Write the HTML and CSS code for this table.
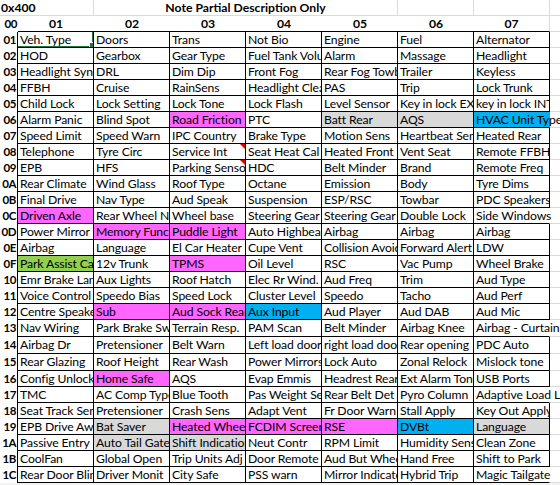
FILE: index.html
```html
<!DOCTYPE html>
<html>
<head>
<meta charset="utf-8">
<link rel="stylesheet" href="styles.css">
</head>
<body>
<div class="sheet" id="sheet">
  <div class="c tl"><span class="b">0x400</span></div>
  <div class="c tg"></div>
  <div class="c tg span4 center b">Note Partial Description Only</div>
  <div class="c tg"></div>
  <div class="c tg"></div>
  <div class="c tb"></div>

  <div class="c rh rh0">00</div>
  <div class="c ch">01</div><div class="c ch">02</div><div class="c ch">03</div><div class="c ch">04</div><div class="c ch">05</div><div class="c ch">06</div><div class="c ch chl">07</div>
  <div class="c ext"></div>
</div>
<script src="app.js"></script>
</body>
</html>
```
FILE: app.js
```js
var rows = [
 ["01","Veh. Type","Doors","Trans","Not Bio","Engine","Fuel","Alternator"],
 ["02","HOD","Gearbox","Gear Type","Fuel Tank Volume","Alarm","Massage","Headlight"],
 ["03","Headlight Sync","DRL","Dim Dip","Front Fog","Rear Fog Towbar","Trailer","Keyless"],
 ["04","FFBH","Cruise","RainSens","Headlight Cleaning","PAS","Trip","Lock Trunk"],
 ["05","Child Lock","Lock Setting","Lock Tone","Lock Flash","Level Sensor","Key in lock EXT","key in lock INT"],
 ["06","Alarm Panic","Blind Spot","Road Friction|p","PTC","Batt Rear|g","AQS|g","HVAC Unit Type|b|o"],
 ["07","Speed Limit","Speed Warn","IPC Country","Brake Type","Motion Sens","Heartbeat Sensor","Heated Rear"],
 ["08","Telephone","Tyre Circ","Service Int|n","Seat Heat Cal","Heated Front","Vent Seat","Remote FFBH"],
 ["09","EPB","HFS","Parking Sensor|n","HDC","Belt Minder","Brand","Remote Freq"],
 ["0A","Rear Climate","Wind Glass","Roof Type","Octane","Emission","Body","Tyre Dims"],
 ["0B","Final Drive","Nav Type","Aud Speak","Suspension","ESP/RSC","Towbar","PDC Speakers"],
 ["0C","Driven Axle|p","Rear Wheel Nut","Wheel base","Steering Gear","Steering Gear","Double Lock","Side Windows|o"],
 ["0D","Power Mirror","Memory Func|p","Puddle Light|p","Auto Highbeam","Airbag","Airbag","Airbag"],
 ["0E","Airbag","Language","El Car Heater","Cupe Vent","Collision Avoid","Forward Alert","LDW"],
 ["0F","Park Assist Cam|gr","12v Trunk","TPMS|p","Oil Level","RSC","Vac Pump","Wheel Brake"],
 ["10","Emr Brake Lamp","Aux Lights","Roof Hatch","Elec Rr Wind.","Aud Freq","Trim","Aud Type"],
 ["11","Voice Control","Speedo Bias","Speed Lock","Cluster Level","Speedo","Tacho","Aud Perf"],
 ["12","Centre Speaker","Sub|p","Aud Sock Rear|p","Aux Input|b","Aud Player","Aud DAB","Aud Mic"],
 ["13","Nav Wiring","Park Brake Sw","Terrain Resp.","PAM Scan","Belt Minder","Airbag Knee","Airbag - Curtain|o"],
 ["14","Airbag Dr","Pretensioner","Belt Warn","Left load door","right load door","Rear opening","PDC Auto"],
 ["15","Rear Glazing","Roof Height","Rear Wash","Power Mirrors","Lock Auto","Zonal Relock","Mislock tone"],
 ["16","Config Unlock","Home Safe|p","AQS","Evap Emmis","Headrest Rear","Ext Alarm Tone","USB Ports"],
 ["17","TMC","AC Comp Type","Blue Tooth","Pas Weight Sensor","Rear Belt Det","Pyro Column","Adaptive Load Limiter|o"],
 ["18","Seat Track Sensor","Pretensioner","Crash Sens","Adapt Vent","Fr Door Warn","Stall Apply","Key Out Apply"],
 ["19","EPB Drive Away","Bat Saver|g","Heated Wheel|p","FCDIM Screen|p","RSE|p","DVBt|b","Language|g"],
 ["1A","Passive Entry","Auto Tail Gate|g","Shift Indication|g","Neut Contr","RPM Limit","Humidity Sensor","Clean Zone"],
 ["1B","CoolFan","Global Open","Trip Units Adj","Door Remote","Aud But Wheel","Hand Free","Shift to Park"],
 ["1C","Rear Door Blind","Driver Monit","City Safe","PSS warn","Mirror Indicator","Hybrid Trip","Magic Tailgate|o"]
];
var sheet = document.getElementById("sheet");
rows.forEach(function (r, ri) {
  var h = document.createElement("div");
  h.className = "c rh";
  h.textContent = r[0];
  sheet.appendChild(h);
  for (var i = 1; i < r.length; i++) {
    var parts = r[i].split("|");
    var d = document.createElement("div");
    var cls = "c d";
    for (var k = 1; k < parts.length; k++) { cls += " f-" + parts[k]; }
    if (ri === 0 && i === 1) cls += " sel";
    d.className = cls;
    var s = document.createElement("span");
    s.className = "t";
    s.textContent = parts[0];
    d.appendChild(s);
    sheet.appendChild(d);
  }
  var e = document.createElement("div");
  e.className = "c ext";
  sheet.appendChild(e);
});
```
FILE: styles.css
```css
html, body {
  margin: 0;
  padding: 0;
  overflow: hidden;
  background: #f2f2f2;
}
.sheet {
  display: grid;
  grid-template-columns: 18px repeat(7, 76px) 1fr;
  grid-template-rows: 16px 16px repeat(18, 16px) 17px 17px 17px 16px repeat(6, 16px);
  background: #fff;
  font-family: Lato, "Liberation Sans", sans-serif;
  font-size: 12.2px;
  color: #000;
  width: 560px;
  overflow: hidden;
}
.c {
  box-sizing: border-box;
  white-space: nowrap;
  line-height: 15px;
  position: relative;
}
.b { font-weight: bold; }
.center { text-align: center; }
.tl {
  border-bottom: 1px solid #dadada;
  overflow: visible;
  padding-left: 1px;
  z-index: 1;
}
.tg {
  border-bottom: 1px solid #dadada;
  border-right: 1px solid #dadada;
}
.tb { border-bottom: 1px solid #dadada; }
.span4 { grid-column: span 4; }
.rh {
  font-weight: bold;
  font-size: 11.5px;
  letter-spacing: -0.4px;
  text-align: right;
  padding-right: 1px;
  border-right: 1px solid #000;
}
.rh0 { border-right: none; }
.ch {
  font-weight: bold;
  text-align: center;
  border-bottom: 1px solid #000;
}
.chl { border-right: 1px solid #dadada; }
.ext { border-bottom: 1px solid #dadada; }
.d {
  border-right: 1px solid #000;
  border-bottom: 1px solid #000;
  padding-left: 2px;
  overflow: hidden;
  letter-spacing: -0.1px;
}
.f-p { background: #ff66ff; }
.f-b { background: #00b0f0; }
.f-g { background: #d9d9d9; }
.f-gr { background: #92d050; }
.f-o {
  overflow: visible;
  border-right-color: transparent;
  z-index: 1;
}
.f-n::after {
  content: "";
  position: absolute;
  top: 0;
  right: 0;
  border-style: solid;
  border-width: 0 5px 5px 0;
  border-color: transparent #e00000 transparent transparent;
}
.sel::before {
  content: "";
  position: absolute;
  top: -2px;
  left: -2px;
  right: -1px;
  bottom: -1px;
  border: 2px solid #217346;
  z-index: 2;
}
.sel::after {
  content: "";
  position: absolute;
  right: -3px;
  bottom: -2px;
  width: 5px;
  height: 5px;
  background: #217346;
  border: 1px solid #fff;
  z-index: 3;
}
```
